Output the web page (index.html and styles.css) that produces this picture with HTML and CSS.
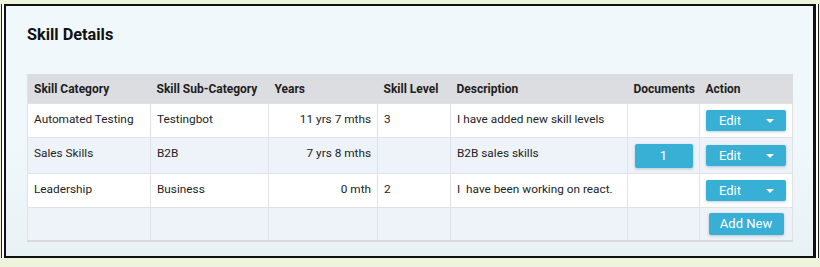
FILE: index.html
```html
<!DOCTYPE html>
<html lang="en">
<head>
  <meta charset="UTF-8">
  <title>Skill Details</title>
  <link rel="stylesheet" href="styles.css">
</head>
<body>
  <div class="frame">
    <div class="panel">
      <h2 class="panel-title">Skill Details</h2>
      <table class="skill-table">
        <colgroup>
          <col style="width:123px">
          <col style="width:118px">
          <col style="width:109px">
          <col style="width:73px">
          <col style="width:177px">
          <col style="width:72px">
          <col style="width:93px">
        </colgroup>
        <thead>
          <tr>
            <th>Skill Category</th>
            <th>Skill Sub-Category</th>
            <th>Years</th>
            <th>Skill Level</th>
            <th>Description</th>
            <th>Documents</th>
            <th>Action</th>
          </tr>
        </thead>
        <tbody>
          <tr>
            <td>Automated Testing</td>
            <td>Testingbot</td>
            <td class="num">11 yrs 7 mths</td>
            <td>3</td>
            <td>I have added new skill levels</td>
            <td></td>
            <td class="act"><button class="btn btn-split">Edit <span class="caret"></span></button></td>
          </tr>
          <tr class="alt tall">
            <td>Sales Skills</td>
            <td>B2B</td>
            <td class="num">7 yrs 8 mths</td>
            <td></td>
            <td>B2B sales skills</td>
            <td class="act"><button class="btn btn-doc">1</button></td>
            <td class="act"><button class="btn btn-split">Edit <span class="caret"></span></button></td>
          </tr>
          <tr>
            <td>Leadership</td>
            <td>Business</td>
            <td class="num">0 mth</td>
            <td>2</td>
            <td>I &nbsp;have been working on react.</td>
            <td></td>
            <td class="act"><button class="btn btn-split">Edit <span class="caret"></span></button></td>
          </tr>
          <tr class="alt short">
            <td></td>
            <td></td>
            <td></td>
            <td></td>
            <td></td>
            <td></td>
            <td class="act"><button class="btn btn-add">Add New</button></td>
          </tr>
        </tbody>
      </table>
    </div>
  </div>
</body>
</html>
```

FILE: styles.css
```css
/* Skill details panel */
:root {
  --page-bg: #eef4dc;
  --panel-top: #f0f8fc;
  --panel-bottom: #e8f1f3;
  --head-bg: #dcdde1;
  --row-alt: #eef2f9;
  --cell-line: #e0e2e6;
  --btn-blue: #38afd5;
  --text: #232323;
}

body {
  margin: 0;
  background: var(--page-bg);
  font-family: Roboto, "Liberation Sans", sans-serif;
  color: var(--text);
}

.frame {
  margin: 4px 1px 5px 1px;
  padding: 0 2px;
  border-left: 1px solid #222;
  border-right: 1px solid #222;
  background: #fff;
}

.panel {
  height: 254px;
  box-sizing: border-box;
  border: 2px solid #111;
  border-right-width: 3px;
  background: linear-gradient(180deg, var(--panel-top) 0%, var(--panel-top) 55%, var(--panel-bottom) 100%);
  padding: 20px 21px 0 21px;
}

.panel-title {
  margin: 0 0 30px 0;
  font-size: 16.3px;
  font-weight: 700;
  color: #111;
  line-height: 18px;
}

.skill-table {
  width: 765px;
  table-layout: fixed;
  border-collapse: collapse;
  font-size: 11.8px;
  border-left: 1px solid var(--cell-line);
  border-bottom: 2px solid #d8dade;
}

.skill-table th {
  background: var(--head-bg);
  text-align: left;
  font-weight: 700;
  font-size: 12px;
  color: #1e1e1e;
  height: 29px;
  padding: 0 6px;
  white-space: nowrap;
}

.skill-table tbody tr {
  height: 34px;
}

.skill-table tbody tr.tall {
  height: 36px;
}

.skill-table tbody tr.short {
  height: 33px;
}

.skill-table td {
  padding: 8px 6px 0 6px;
  border: 1px solid var(--cell-line);
  background: #fff;
  white-space: nowrap;
  vertical-align: top;
  line-height: 14px;
}

.skill-table tr.alt td {
  background: var(--row-alt);
}

.skill-table td.num {
  text-align: right;
}

.skill-table td.act {
  padding: 0 5px;
  vertical-align: middle;
}

.btn {
  border: none;
  background: var(--btn-blue);
  color: #fff;
  font-family: Roboto, "Liberation Sans", sans-serif;
  font-size: 13px;
  border-radius: 2px;
  box-shadow: 0 1px 3px rgba(0, 60, 90, 0.25);
  cursor: pointer;
  padding: 0;
  display: block;
  margin: 0 auto;
}

.btn-split {
  width: 80px;
  height: 21px;
  display: flex;
  align-items: center;
  justify-content: space-between;
  padding: 0 12px 0 13px;
}

.caret {
  width: 0;
  height: 0;
  border-left: 4px solid transparent;
  border-right: 4px solid transparent;
  border-top: 4px solid #fff;
}

.btn-doc {
  width: 58px;
  height: 24px;
}

.btn-add {
  width: 75px;
  height: 22px;
}
```
